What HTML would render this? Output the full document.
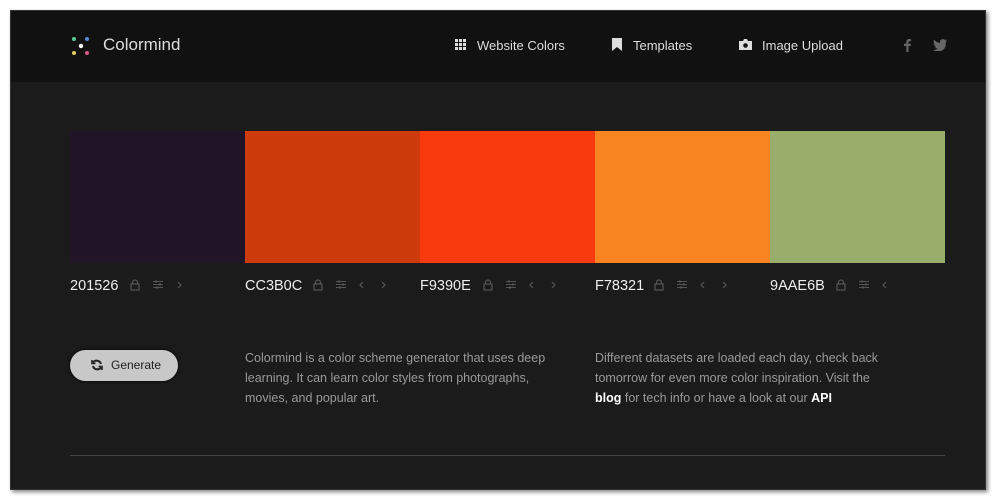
<!DOCTYPE html>
<html><head><style>
body{margin:0;width:1000px;height:500px;background:#fff;position:relative;overflow:hidden;font-family:"Liberation Sans",sans-serif}
.win{position:absolute;left:10px;top:10px;width:976px;height:480px;background:#1b1b1b;box-shadow:2px 2px 4px rgba(0,0,0,.5);border:1px solid #333;box-sizing:border-box}
.hdr{position:absolute;left:0;top:0;right:0;height:71px;background:#111}
.t{position:absolute;color:#ddd;white-space:nowrap}
.sw{position:absolute;top:120px;height:132px;width:175px}
.hex{position:absolute;top:267px;color:#eee;font-size:14.5px}
.ic{position:absolute;top:268px}
.p{position:absolute;top:337px;color:#999;font-size:12.5px;line-height:20px;width:330px}
.p b{color:#fff;font-weight:bold}
</style></head><body>
<svg width="0" height="0" style="position:absolute">
<defs>
<g id="lk" fill="none" stroke="#555" stroke-width="1.2"><path d="M2.5 5V3.5a2.5 2.5 0 0 1 5 0V5"/><rect x="1" y="5" width="8" height="6"/></g>
<g id="sl" stroke="#555" stroke-width="1"><path d="M0 2.5H10M0 5.5H10M0 8.5H10"/><path d="M3 1V4M7 4V7M4 7V10"/></g>
<path id="rt" d="M1 1L4 4L1 7" fill="none" stroke="#555" stroke-width="1.2"/>
<path id="lt" d="M4 1L1 4L4 7" fill="none" stroke="#555" stroke-width="1.2"/>
</defs></svg>
<div class="win">
<div class="hdr">
<svg style="position:absolute;left:59px;top:24px" width="22" height="22"><circle cx="4" cy="4" r="2" fill="#5c9"/><circle cx="17" cy="4" r="2" fill="#58d"/><circle cx="11" cy="11" r="2.2" fill="#fff"/><circle cx="4" cy="18" r="2" fill="#dc5"/><circle cx="17" cy="18" r="2" fill="#d58"/></svg>
<div class="t" style="left:92px;top:24px;font-size:17px;color:#ddd">Colormind</div>
<svg style="position:absolute;left:444px;top:28px" width="12" height="11" fill="#ddd"><rect x="0" y="0" width="3" height="3"/><rect x="4" y="0" width="3" height="3"/><rect x="8" y="0" width="3" height="3"/><rect x="0" y="4" width="3" height="3"/><rect x="4" y="4" width="3" height="3"/><rect x="8" y="4" width="3" height="3"/><rect x="0" y="8" width="3" height="3"/><rect x="4" y="8" width="3" height="3"/><rect x="8" y="8" width="3" height="3"/></svg>
<div class="t" style="left:466px;top:27px;font-size:13px">Website Colors</div>
<svg style="position:absolute;left:601px;top:27px" width="10" height="13" fill="#ddd"><path d="M0 0H10V13L5 9L0 13Z"/></svg>
<div class="t" style="left:622px;top:27px;font-size:13px">Templates</div>
<svg style="position:absolute;left:728px;top:28px" width="13" height="11" fill="#ddd"><path d="M0 2H4L5 0H8L9 2H13V11H0Z"/><circle cx="6.5" cy="6.5" r="2.3" fill="#111"/></svg>
<div class="t" style="left:751px;top:27px;font-size:13px">Image Upload</div>
<svg style="position:absolute;left:893px;top:28px" width="7" height="13" fill="#666"><path d="M4.5 13V7H6.5L7 4.7H4.5V3.3C4.5 2.6 4.8 2.2 5.6 2.2H7V.1C6.6 0 5.9 0 5.2 0 3.600 0 2.300 1 2.300 2.900V4.700H0V7H2.300V13Z"/></svg>
<svg style="position:absolute;left:922px;top:28px" width="14" height="12" fill="#666"><path d="M14 1.4C13.5 1.7 12.900 1.800 12.300 1.900 12.900 1.500 13.400 1 13.600.3 13 .7 12.400.9 11.800 1 10.400-.5 7.800 0 7.100 2 6.900 2.600 6.900 3.200 7 3.700 4.600 3.600 2.500 2.500 1 .6.200 2 .6 3.700 1.900 4.600 1.400 4.600 1 4.500.6 4.300.6 5.800 1.700 7 3 7.300 2.600 7.400 2.100 7.400 1.700 7.300 2.100 8.600 3.300 9.400 4.600 9.500 3.200 10.600 1.600 11.100 0 11 6.600 15 14 10.500 12.600 3.500 13.200 2.900 13.700 2.200 14 1.400Z"/></svg>
</div>
<div class="sw" style="left:59px;background:#201526"></div>
<div class="sw" style="left:234px;background:#CC3B0C"></div>
<div class="sw" style="left:409px;background:#F9390E"></div>
<div class="sw" style="left:584px;background:#F78321"></div>
<div class="sw" style="left:759px;background:#9AAE6B"></div>

<div class="hex" style="left:59px">201526</div>
<svg class="ic" style="left:119px" width="70" height="12"><use href="#lk"/><use href="#sl" x="23"/><use href="#rt" x="47" y="2"/></svg>
<div class="hex" style="left:234px">CC3B0C</div>
<svg class="ic" style="left:302px" width="90" height="12"><use href="#lk"/><use href="#sl" x="23"/><use href="#lt" x="46" y="2"/><use href="#rt" x="68" y="2"/></svg>
<div class="hex" style="left:409px">F9390E</div>
<svg class="ic" style="left:472px" width="90" height="12"><use href="#lk"/><use href="#sl" x="23"/><use href="#lt" x="46" y="2"/><use href="#rt" x="68" y="2"/></svg>
<div class="hex" style="left:584px">F78321</div>
<svg class="ic" style="left:643px" width="90" height="12"><use href="#lk"/><use href="#sl" x="23"/><use href="#lt" x="46" y="2"/><use href="#rt" x="68" y="2"/></svg>
<div class="hex" style="left:759px">9AAE6B</div>
<svg class="ic" style="left:825px" width="70" height="12"><use href="#lk"/><use href="#sl" x="23"/><use href="#lt" x="46" y="2"/></svg>

<div style="position:absolute;left:59px;top:339px;width:108px;height:31px;border-radius:16px;background:#c8c8c8;box-shadow:0 0 3px #000"></div>
<svg style="position:absolute;left:80px;top:348px" width="12" height="12" fill="none" stroke="#222" stroke-width="2"><path d="M10 5A4.5 4.5 0 0 0 2 3.500"/><path d="M2 7A4.5 4.5 0 0 0 10 8.500"/><path d="M1 1V4.500H4.500" stroke-width="1.6"/><path d="M11 11V7.500H7.500" stroke-width="1.6"/></svg>
<div class="t" style="left:100px;top:347px;font-size:12px;color:#222">Generate</div>
<div class="p" style="left:234px">Colormind is a color scheme generator that uses deep learning. It can learn color styles from photographs, movies, and popular art.</div>
<div class="p" style="left:584px;width:300px">Different datasets are loaded each day, check back tomorrow for even more color inspiration. Visit the <b>blog</b> for tech info or have a look at our <b>API</b></div>
<div style="position:absolute;left:59px;top:444px;width:875px;height:1px;background:#444"></div>
</div>
</body></html>
